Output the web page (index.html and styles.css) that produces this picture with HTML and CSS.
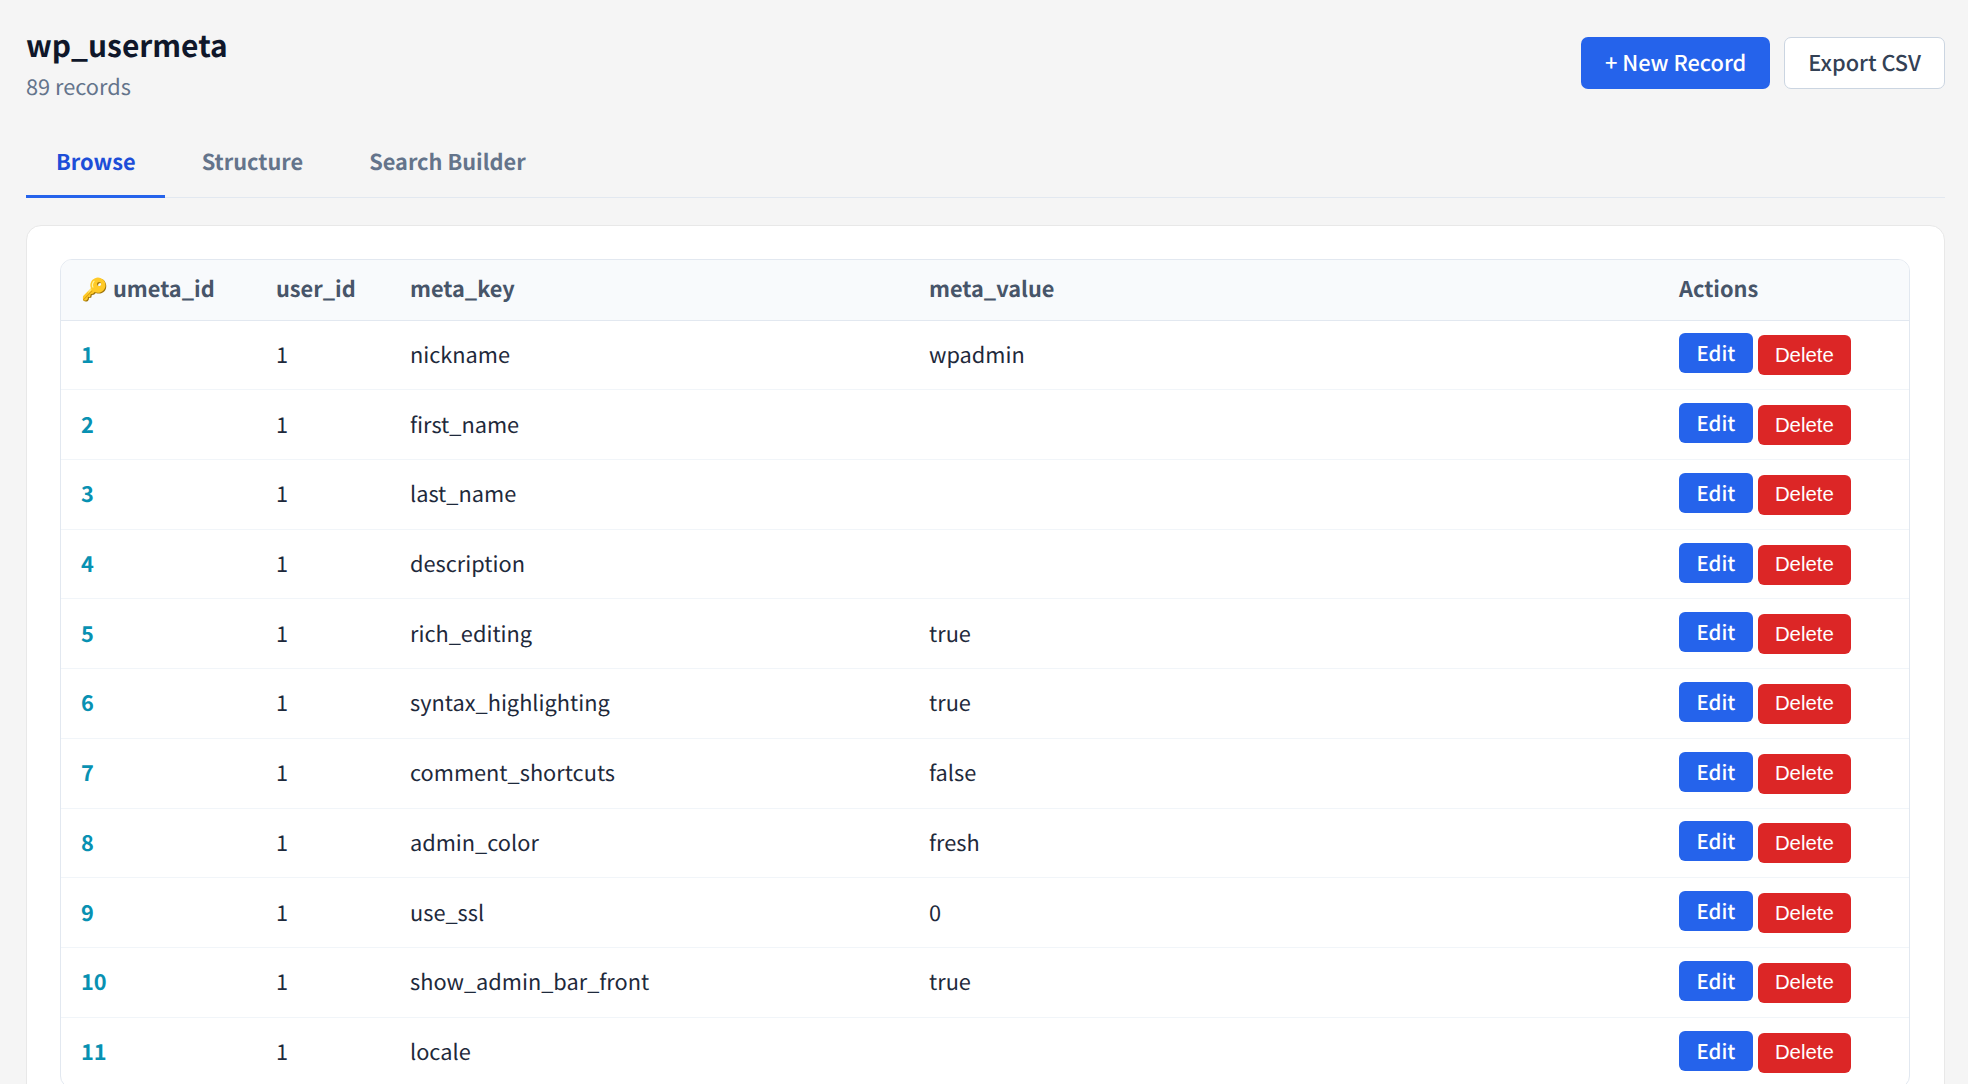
FILE: index.html
```html
<!DOCTYPE html>
<html lang="en">
<head>
<meta charset="utf-8">
<title>wp_usermeta</title>
<link rel="stylesheet" href="styles.css">
</head>
<body>
<main class="page">
  <header class="head">
    <div>
      <h1 class="title">wp_usermeta</h1>
      <p class="count">89 records</p>
    </div>
    <div class="head-actions">
      <a class="btn btn-primary">+ New Record</a>
      <a class="btn btn-outline">Export CSV</a>
    </div>
  </header>
  <nav class="tabs">
    <a class="tab tab-active">Browse</a>
    <a class="tab">Structure</a>
    <a class="tab">Search Builder</a>
  </nav>
  <section class="card">
    <div class="table-wrap">
      <table class="table">
        <colgroup>
          <col class="c1"><col class="c2"><col class="c3"><col class="c4"><col class="c5">
        </colgroup>
        <thead>
          <tr><th>🔑 umeta_id</th><th>user_id</th><th>meta_key</th><th>meta_value</th><th>Actions</th></tr>
        </thead>
        <tbody>
          <tr><td class="id">1</td><td>1</td><td>nickname</td><td>wpadmin</td><td class="actions"><a class="sm sm-edit">Edit</a> <button class="sm sm-del">Delete</button></td></tr>
          <tr><td class="id">2</td><td>1</td><td>first_name</td><td></td><td class="actions"><a class="sm sm-edit">Edit</a> <button class="sm sm-del">Delete</button></td></tr>
          <tr><td class="id">3</td><td>1</td><td>last_name</td><td></td><td class="actions"><a class="sm sm-edit">Edit</a> <button class="sm sm-del">Delete</button></td></tr>
          <tr><td class="id">4</td><td>1</td><td>description</td><td></td><td class="actions"><a class="sm sm-edit">Edit</a> <button class="sm sm-del">Delete</button></td></tr>
          <tr><td class="id">5</td><td>1</td><td>rich_editing</td><td>true</td><td class="actions"><a class="sm sm-edit">Edit</a> <button class="sm sm-del">Delete</button></td></tr>
          <tr><td class="id">6</td><td>1</td><td>syntax_highlighting</td><td>true</td><td class="actions"><a class="sm sm-edit">Edit</a> <button class="sm sm-del">Delete</button></td></tr>
          <tr><td class="id">7</td><td>1</td><td>comment_shortcuts</td><td>false</td><td class="actions"><a class="sm sm-edit">Edit</a> <button class="sm sm-del">Delete</button></td></tr>
          <tr><td class="id">8</td><td>1</td><td>admin_color</td><td>fresh</td><td class="actions"><a class="sm sm-edit">Edit</a> <button class="sm sm-del">Delete</button></td></tr>
          <tr><td class="id">9</td><td>1</td><td>use_ssl</td><td>0</td><td class="actions"><a class="sm sm-edit">Edit</a> <button class="sm sm-del">Delete</button></td></tr>
          <tr><td class="id">10</td><td>1</td><td>show_admin_bar_front</td><td>true</td><td class="actions"><a class="sm sm-edit">Edit</a> <button class="sm sm-del">Delete</button></td></tr>
          <tr><td class="id">11</td><td>1</td><td>locale</td><td></td><td class="actions"><a class="sm sm-edit">Edit</a> <button class="sm sm-del">Delete</button></td></tr>
        </tbody>
      </table>
    </div>
  </section>
</main>
</body>
</html>
```

FILE: styles.css
```css
* { box-sizing: border-box; }
html, body { margin: 0; height: 100%; overflow: hidden; }
body {
  background: #f5f5f5;
  color: #1e293b;
  font-family: "Noto Sans CJK SC", "Noto Sans", sans-serif;
  font-size: 21.76px;
  text-rendering: geometricPrecision;
}
.page { padding: 24px 23px 0 26px; }
.head { display: flex; justify-content: space-between; align-items: flex-start; height: 108px; }
.title { margin: 0; font-size: 29.92px; line-height: 40px; font-weight: 700; color: #0f172a; }
.count { margin: 7px 0 0; font-size: 21.76px; line-height: 32px; color: #64748b; }
.head-actions { display: flex; gap: 14px; margin-top: 13px; }
.btn {
  display: block; height: 52px; line-height: 50px; padding: 0 23px;
  border-radius: 7px; font-size: 21.76px; font-weight: 500; border: 1px solid transparent;
}
.btn-primary { background: #2563eb; color: #fff; }
.btn-outline { background: #fff; color: #334155; border-color: #cbd5e1; }
.tabs { display: flex; gap: 6.5px; border-bottom: 1px solid #e2e8f0; height: 66px; }
.tab { padding: 0 29.5px 0 30px; height: 66px; line-height: 60px; font-size: 21.76px; font-weight: 700; color: #64748b; }
.tab-active { color: #1d4ed8; border-bottom: 3px solid #2563eb; }
.card {
  margin-top: 27px; background: #fff; border: 1px solid #e8e8e8; border-radius: 15px;
  padding: 33px 34px 32px 33px; height: 1000px;
}
.table-wrap { border: 1px solid #e2e8f0; border-radius: 12px; overflow: hidden; }
.table { width: 100%; border-collapse: collapse; table-layout: fixed; }
.c1 { width: 195px; } .c2 { width: 134px; } .c3 { width: 519px; } .c4 { width: 750px; }
th {
  background: #f8fafc; color: #475569; font-size: 21.76px; font-weight: 700; text-align: left;
  height: 60px; padding: 0 20px 2px; border-bottom: 1px solid #e2e8f0;
}
td { height: 69.72px; padding: 0 20px 1px; font-size: 21.76px; border-bottom: 1px solid #f1f5f9; color: #1e293b; }
td.actions { padding-bottom: 3px; }
.id { color: #0891b2; font-weight: 700; }
.sm { display: inline-block; border-radius: 6px; color: #fff; vertical-align: middle; }
.sm-edit { background: #2563eb; width: 74px; height: 40px; line-height: 39px; text-align: center; font-size: 20.4px; font-weight: 500; }
.sm-del { background: #dc2626; width: 93px; height: 40px; border: 0; font-family: "Liberation Sans", sans-serif; font-size: 20.4px; padding: 0; position: relative; top: 2px; }
```
